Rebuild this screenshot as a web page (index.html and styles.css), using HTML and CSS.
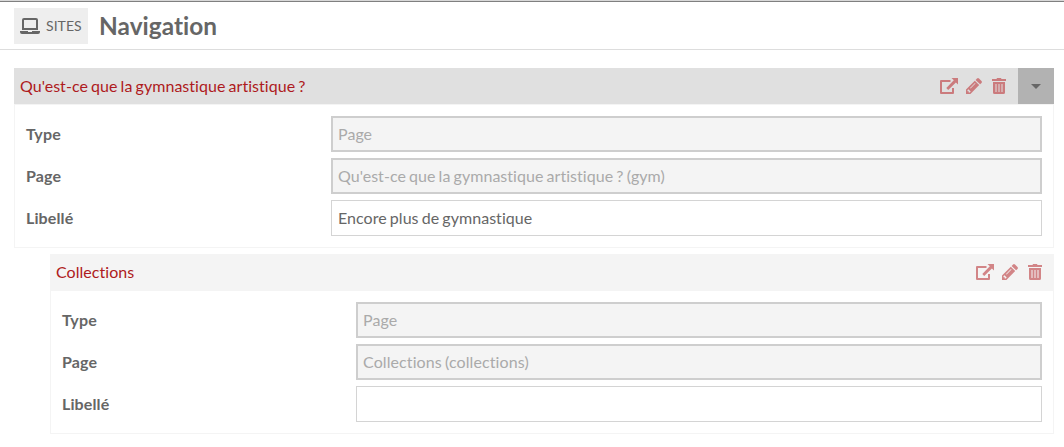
FILE: index.html
```html
<!DOCTYPE html>
<html lang="fr">
<head>
<meta charset="utf-8">
<title>Navigation</title>
<link rel="stylesheet" href="styles.css">
</head>
<body>
<svg class="defs">
<symbol id="open" viewBox="0 0 18 16"><path d="M10.500 3H1V15H13V10" fill="none" stroke="currentColor" stroke-width="2" stroke-linejoin="round"/><path d="M11.500 0H18V6.500L15.900 4.500L8.200 12L6.300 10.100L13.800 2.300Z" fill="currentColor"/></symbol>
<symbol id="edit" viewBox="0 0 16 16"><path fill="currentColor" fill-rule="evenodd" d="M0 16V11.600L8.800 2.700L13.200 7.100L4.400 16ZM1.500 12.300V13.300H2.700V14.600H3.700L4.700 13.600L2.400 11.300ZM9.600 1.900L11 .5Q12 -.3 13 .5L15.500 3Q16.300 4 15.500 5L14.100 6.300ZM4 10L9 5L9.500 5.500L4.500 10.500Z"/></symbol>
<symbol id="trash" viewBox="0 0 14 16"><path fill="currentColor" fill-rule="evenodd" d="M0 1H4.500L5 0H9L9.500 1H14V3H0ZM1 4H13V14.500Q13 16 11.500 16H2.500Q1 16 1 14.500ZM3.500 6V14H4.500V6ZM6.500 6V14H7.500V6ZM9.500 6V14H10.500V6Z"/></symbol>
</svg>
<header class="topbar">
<a class="sites"><svg class="laptop" viewBox="0 0 20 16"><path d="M4 1H16Q17 1 17 2V11H3V2Q3 1 4 1Z" fill="none" stroke="currentColor" stroke-width="2"/><path d="M0 13H8V14H12V13H20V14Q20 16 18 16H2Q0 16 0 14Z" fill="currentColor"/></svg><span>SITES</span></a>
<h1>Navigation</h1>
</header>
<main>
<section class="item">
<div class="item-head"><h2>Qu'est-ce que la gymnastique artistique ?</h2><div class="actions"><svg class="open"><use href="#open"/></svg><svg class="edit"><use href="#edit"/></svg><svg class="trash"><use href="#trash"/></svg></div><button class="toggle"><i></i></button></div>
<div class="fields">
<label><b>Type</b><input disabled value="Page"></label>
<label><b>Page</b><input disabled value="Qu'est-ce que la gymnastique artistique ? (gym)"></label>
<label><b>Libellé</b><input value="Encore plus de gymnastique"></label>
</div>
</section>
<section class="item child">
<div class="item-head"><h2>Collections</h2><div class="actions"><svg class="open"><use href="#open"/></svg><svg class="edit"><use href="#edit"/></svg><svg class="trash"><use href="#trash"/></svg></div></div>
<div class="fields">
<label><b>Type</b><input disabled value="Page"></label>
<label><b>Page</b><input disabled value="Collections (collections)"></label>
<label><b>Libellé</b><input></label>
</div>
</section>
</main>
</body>
</html>
```
FILE: styles.css
```css
*{box-sizing:border-box}
body{margin:0;background:#fff;color:#666;font:16px/24px Lato,sans-serif;font-variant-ligatures:none;word-spacing:-1px;letter-spacing:.04px}
.defs{display:none}
.topbar{height:50px;border-bottom:1px solid #ddd;padding:8px 14px;display:flex;gap:11px;align-items:flex-start;background:linear-gradient(#d8d8d8 1px,#808080 1px,#808080 2px,#fff 2px)}
.sites{height:36px;width:74px;background:#eee;display:flex;align-items:center;padding-left:6px;gap:6px;font-size:14px}
.laptop{width:20px;height:16px;flex:none}
h1{margin:0;font-size:24.400px;line-height:36px;font-weight:700}
main{padding:18px 10px 0 14px}
.item{border:1px solid #f4f4f4;height:180px;margin-bottom:6px}
.child{margin-left:36px}
.item-head{height:36px;margin:-1px -1px 0;padding-left:6px;background:#e0e0e0;display:flex;align-items:center;box-shadow:0 1px #f4f4f4}
.child .item-head{background:#f4f4f4;padding-right:12px}
h2{margin:0;flex:1;font-size:16px;font-weight:400;color:#ae1a20}
.actions{display:flex;align-items:center;color:#cb7b7d;margin-right:12px}
.child .actions{margin-right:0;color:#d28587}
.open{width:18px;height:16px;margin-right:8px}
.edit{width:16px;height:16px;margin-right:10px}
.trash{width:14px;height:16px}
.toggle{width:36px;height:36px;border:0;padding:0;background:#b2b2b2;display:grid;place-items:center}
.toggle i{border:5px solid transparent;border-top-color:#666;border-bottom:0}
.fields{padding:12px 11px;display:flex;flex-direction:column;gap:6px}
label{display:flex;align-items:center}
b{flex:1;font-weight:700;letter-spacing:.12px}
input{width:711px;height:36px;border:1px solid #d4d4d4;border-radius:0;padding:0 6px 2px;background:#fff;font:inherit;font-variant-ligatures:none;word-spacing:inherit;letter-spacing:inherit;color:#666}
.child input{width:686px;letter-spacing:.1px}
input:disabled{border:2px solid #cecece;padding:0 5px 2px;background:#f4f4f4;color:#aaa}
```
